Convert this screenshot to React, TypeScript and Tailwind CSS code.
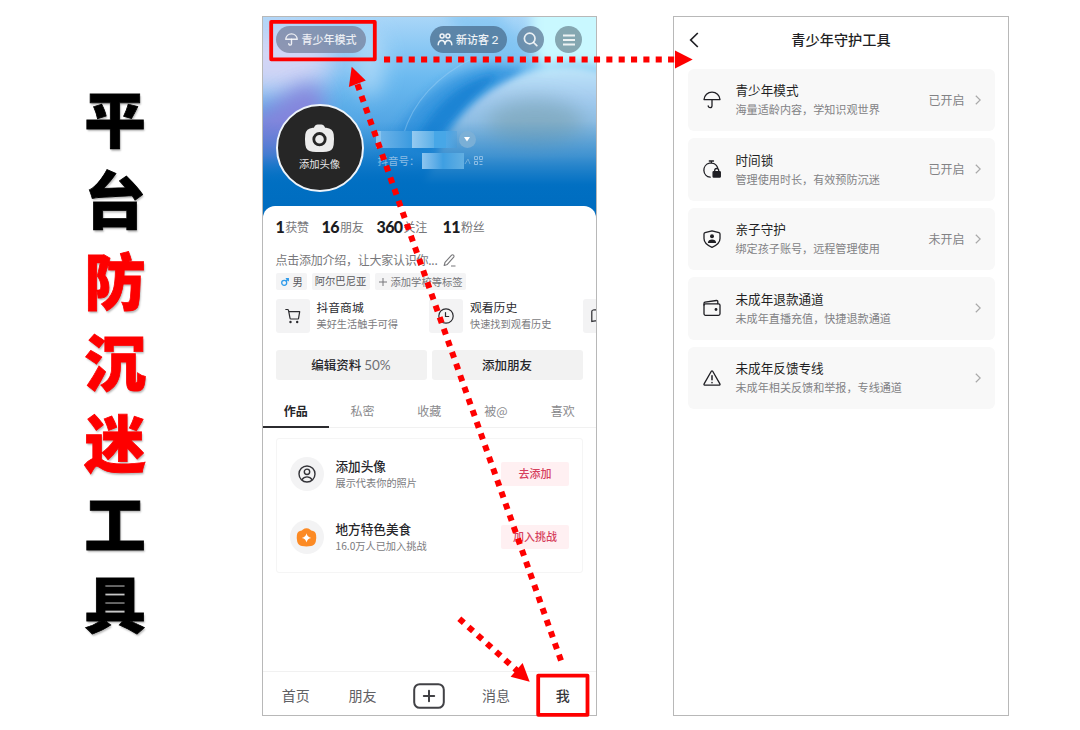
import React from 'react';

const RED = '#fe0000';

function Umbrella({ className, w = 1.5 }: { className: string; w?: number }) {
  return (
    <svg className={className} viewBox="0 0 18 18" fill="none" stroke="currentColor" strokeWidth={w} strokeLinecap="round" strokeLinejoin="round">
      <path d="M1 8.6C1.3 4.4 4.7 1.2 9 1.2s7.700 3.200 8 7.400Z" />
      <path d="M9 8.600v6.200a1.900 1.900 0 0 1-3.800 0" />
    </svg>
  );
}

function Chevron() {
  return (
    <svg className="h-[10px] w-[6px] text-[#a9a9a9]" viewBox="0 0 6 10" fill="none" stroke="currentColor" strokeWidth="1.200">
      <path d="M.8.8 5.200 5 .8 9.200" />
    </svg>
  );
}

function HeaderArt() {
  return (
    <svg className="absolute inset-0 h-full w-full" viewBox="0 0 333 202" preserveAspectRatio="none">
      <defs>
        <linearGradient id="sky" x1="0" y1="0" x2="0" y2="1">
          <stop offset="0" stopColor="#a9d6f8" />
          <stop offset=".3" stopColor="#6cbaf0" />
          <stop offset=".6" stopColor="#4a9fe0" />
          <stop offset=".82" stopColor="#0c73c6" />
          <stop offset="1" stopColor="#006cbf" />
        </linearGradient>
        <linearGradient id="fade" x1="0" y1="0" x2="0" y2="1">
          <stop offset="0" stopColor="#0070c4" stopOpacity="0" />
          <stop offset=".35" stopColor="#0070c4" stopOpacity=".4" />
          <stop offset=".65" stopColor="#006fc2" stopOpacity=".97" />
          <stop offset="1" stopColor="#006cbf" />
        </linearGradient>
        <linearGradient id="orb" x1="0" y1="0" x2="0" y2="1">
          <stop offset="0" stopColor="#bfe6fa" />
          <stop offset=".25" stopColor="#a6cdf0" />
          <stop offset=".6" stopColor="#7db3dc" />
          <stop offset="1" stopColor="#4c98d4" />
        </linearGradient>
        <filter id="b16" x="-60%" y="-60%" width="220%" height="220%"><feGaussianBlur stdDeviation="14" /></filter>
        <filter id="b9" x="-60%" y="-60%" width="220%" height="220%"><feGaussianBlur stdDeviation="10" /></filter>
        <filter id="b6" x="-40%" y="-40%" width="180%" height="180%"><feGaussianBlur stdDeviation="6" /></filter>
        <filter id="b3" x="-30%" y="-30%" width="160%" height="160%"><feGaussianBlur stdDeviation="3.500" /></filter>
      </defs>
      <rect width="333" height="202" fill="url(#sky)" />
      <ellipse cx="12" cy="44" rx="62" ry="34" fill="#dcd8f6" opacity=".9" filter="url(#b16)" />
      <path d="M-20 104C8 92 28 68 46 66c16 2 18 20 12 38l-30 40-50 5Z" fill="#8a7fda" opacity=".85" filter="url(#b9)" />
      <ellipse cx="106" cy="46" rx="16" ry="34" fill="#bcdff9" opacity=".7" filter="url(#b9)" />
      <path d="M118 150C135 95 185 48 236 48L262 50 200 140Z" fill="#2a8edb" opacity=".75" filter="url(#b6)" />
      <path d="M150 130C165 95 195 62 234 58L206 85 165 130Z" fill="#1680d2" opacity=".8" filter="url(#b3)" />
      <path d="M176 133C196 92 228 66 274 52Q314 44 350 60v110H160Z" fill="url(#orb)" filter="url(#b3)" />
      <ellipse cx="272" cy="106" rx="48" ry="24" fill="#7ea6b8" opacity=".7" filter="url(#b9)" />
      <path d="M268-14h84v68q-50-14-70-2-14-12-14-34Z" fill="#c9f8ff" filter="url(#b6)" />
      <path d="M180-5C200 20 225 44 250 46L262 30 235-5Z" fill="#7cc2f2" opacity=".6" filter="url(#b6)" />
      <path d="M140 118C150 84 175 58 212 40" fill="none" stroke="#a0d3f6" strokeWidth="1.100" opacity=".45" />
      <rect y="104" width="333" height="98" fill="url(#fade)" />
    </svg>
  );
}

function Camera() {
  return (
    <svg className="h-[29px] w-[31px]" viewBox="0 0 31 29">
      <path d="M10.500 2.600Q11.500.5 13.600.5h3.800q2.100 0 3.100 2.100l.6 1.200h1q6.900.7 7.600 6.500.7 5.200 0 10.400-.8 6.300-7.100 7-7.100.8-14.200 0-6.300-.7-7.100-7-.7-5.200 0-10.400.7-5.800 7.600-6.500h1Z" fill="#ececec" />
      <circle cx="15.500" cy="15.200" r="5.700" fill="#ececec" stroke="#262626" strokeWidth="2.800" />
    </svg>
  );
}

function Header() {
  return (
    <div className="relative h-[202px] shrink-0">
      <HeaderArt />
      <div className="relative flex h-[190px] flex-col px-[13px] pt-[9px] text-white/85">
        <div className="flex items-center">
          <div className="flex h-[27px] w-[90px] items-center gap-[4px] rounded-full bg-[#75809c]/75 pl-[9px]">
            <Umbrella className="h-[13px] w-[13px]" w={1.900} />
            <span className="whitespace-nowrap text-[11px] font-medium">青少年模式</span>
          </div>
          <div className="ml-auto flex h-[27px] w-[77px] items-center gap-[3px] rounded-full bg-[#4d7395]/80 pl-[7px] text-white/90">
            <svg className="h-[13px] w-[16px]" viewBox="0 0 16 13" fill="none" stroke="currentColor" strokeWidth="1.500" strokeLinecap="round">
              <circle cx="5.100" cy="3" r="2" /><circle cx="10.900" cy="3" r="2" />
              <path d="M1.200 11.800q.2-4.300 3.700-4.300 3 0 3.100 4.300.1-4.300 3.100-4.300 3.500 0 3.700 4.300" />
            </svg>
            <span className="whitespace-nowrap text-[11px] font-medium">新访客 <span className="font-[Lato] text-[12px]">2</span></span>
          </div>
          <div className="ml-[10px] flex size-[27px] items-center justify-center rounded-full bg-[#64829d]/80">
            <svg className="size-[15px]" viewBox="0 0 15 15" fill="none" stroke="currentColor" strokeWidth="1.700" strokeLinecap="round">
              <circle cx="6.700" cy="6.500" r="5.300" /><path d="m10.600 10.500 3.200 3.200" />
            </svg>
          </div>
          <div className="ml-[11px] mr-[1px] flex size-[27px] items-center justify-center rounded-full bg-[#7d9da9]/90">
            <svg className="h-[12px] w-[12px]" viewBox="0 0 12 12" stroke="currentColor" strokeWidth="1.800">
              <path d="M0 1.500h12M0 6h12M0 10.500h12" />
            </svg>
          </div>
        </div>
        <div className="mt-[51px] flex">
          <div className="flex size-[88px] shrink-0 flex-col items-center rounded-full border-2 border-[#eef4fa] bg-[#262626] pt-[18px]">
            <Camera />
            <span className="mt-[4px] text-[10.300px] leading-[14px] text-white/90">添加头像</span>
          </div>
          <div className="ml-[12px] pt-[27px]">
            <div className="flex items-center">
              <div className="h-[17px] w-[81px] bg-linear-to-r from-[#8ac4ee] from-5% via-[#52aae8] via-85% to-[#3b98dc]/30">
                <div className="ml-[5px] flex h-full">
                  <div className="h-full w-[29px] bg-linear-to-r from-[#6ab2e8] to-[#3d9ce0]" />
                  <div className="h-full w-[2px] bg-[#3d9ce0]" />
                  <div className="h-full w-[22px] bg-linear-to-r from-[#95caf0] to-[#5cb0e8]" />
                  <div className="h-full w-[12px] bg-[#47a7e7]" />
                </div>
              </div>
              <div className="ml-[2px] flex size-[17px] items-center justify-center rounded-full bg-[#7db0d6]/90">
                <svg className="h-[5px] w-[6px]" viewBox="0 0 6 5" fill="white"><path d="M0 0h6L3 4.500Z" /></svg>
              </div>
            </div>
            <div className="mt-[4px] flex h-[17px] items-center pl-[2px]">
              <span className="w-[42px] whitespace-nowrap text-[10.500px] text-[#8bbce4]">抖音号：</span>
              <div className="ml-[2px] h-[16px] w-[42px] bg-linear-to-r from-[#8dc5ef] via-[#3e9fe2] to-[#62afe2]" />
              <svg className="h-[8px] w-[8px]" viewBox="0 0 8 8" fill="none" stroke="#70addc" strokeWidth="1"><path d="m1 7 3-5 2 5" /></svg>
              <svg className="ml-[2px] size-[9px]" viewBox="0 0 9 9" fill="none" stroke="#8bbce4" strokeWidth="1">
                <path d="M.5.5h3v3h-3ZM5.500.5h3v3h-3ZM.5 5.500h3v3h-3ZM5.500 5.500h3M5.500 8.500h3" />
              </svg>
            </div>
          </div>
        </div>
      </div>
    </div>
  );
}

function Stat({ n, label, w }: { n: string; label: string; w: string }) {
  return (
    <div className={`flex items-center gap-[1px] whitespace-nowrap ${w}`}>
      <span className="font-[Lato] text-[16px] font-black tracking-[-0.600px] text-[#1c1c22]">{n}</span>
      <span className="text-[12px] tracking-[-0.200px] text-[#77777a]">{label}</span>
    </div>
  );
}

function Shortcut({ title, sub, w, children }: { title: string; sub: string; w: string; children: React.ReactNode }) {
  return (
    <div className={`flex shrink-0 ${w}`}>
      <div className="flex size-[34px] shrink-0 items-center justify-center rounded-[3px] bg-[#f3f3f4] text-[#2b2b2f]">{children}</div>
      <div className="-mt-px ml-[7px] whitespace-nowrap">
        <div className="text-[11.800px] leading-[18px] text-[#2b2b2f]">{title}</div>
        <div className="text-[10.200px] leading-[16px] text-[#7b7b7e]">{sub}</div>
      </div>
    </div>
  );
}

function Task({ title, sub, action, children }: { title: string; sub: string; action: string; children: React.ReactNode }) {
  return (
    <div className="flex h-[34px] items-center">
      <div className="flex size-[34px] shrink-0 items-center justify-center rounded-full bg-[#f3f3f4]">{children}</div>
      <div className="ml-[12px] whitespace-nowrap">
        <div className="text-[12.600px] font-medium leading-[18px] text-[#26262a]">{title}</div>
        <div className="text-[10.200px] leading-[16px] text-[#7b7b7e]">{sub}</div>
      </div>
      <div className="ml-auto flex h-[24px] w-[68px] items-center justify-center rounded-[2px] bg-[#fff0f2] pb-[2px] text-[11px] font-medium text-[#d6405c]">{action}</div>
    </div>
  );
}

function ProfilePhone() {
  return (
    <div className="mt-[16px] flex h-[700px] w-[335.500px] shrink-0 flex-col overflow-hidden border border-[#b8b8b8] bg-white">
      <Header />
      <div className="relative -mt-[13px] flex min-h-0 flex-1 flex-col rounded-t-[12px] bg-white">
        <div className="mt-[10px] flex h-[22px] items-center pl-[13px]">
          <Stat n="1" label="获赞" w="w-[46px]" />
          <Stat n="16" label="朋友" w="w-[55px]" />
          <Stat n="360" label="关注" w="w-[66px]" />
          <Stat n="11" label="粉丝" w="" />
        </div>
        <div className="mt-[12px] flex h-[20px] items-center gap-[5px] whitespace-nowrap pl-[13px] text-[12px] tracking-[-0.250px] text-[#77777a]">
          点击添加介绍，让大家认识你...
          <svg className="h-[13px] w-[13px]" viewBox="0 0 13 13" fill="none" stroke="currentColor" strokeWidth="1.100" strokeLinejoin="round">
            <path d="M1.200 11.500 2 8.300 8.600 1.200q1-.8 1.900 0t.2 1.900L4.300 10.400ZM8 12h4.500" />
          </svg>
        </div>
        <div className="mt-[3px] flex h-[17px] gap-[5px] whitespace-nowrap pl-[13px] text-[10.300px] leading-[16px] text-[#58585c]">
          <div className="flex w-[31px] items-center gap-[4px] rounded-[2px] bg-[#f4f4f5] pl-[5px]">
            <svg className="size-[8px]" viewBox="0 0 8 8" fill="none" stroke="#2f9bea" strokeWidth="1.300"><circle cx="3.200" cy="4.800" r="2.500" /><path d="M5 3 7.300.7M4.800.7h2.500v2.500" /></svg>
            <span>男</span>
          </div>
          <div className="w-[58px] rounded-[2px] bg-[#f4f4f5] text-center">阿尔巴尼亚</div>
          <div className="flex w-[91px] items-center gap-[4px] rounded-[2px] bg-[#f4f4f5] pl-[4px] text-[#77777a]">
            <svg className="size-[8px]" viewBox="0 0 8 8" stroke="currentColor"><path d="M0 4h8M4 0v8" /></svg>
            <span>添加学校等标签</span>
          </div>
        </div>
        <div className="mt-[9px] flex overflow-visible pl-[13px]">
          <Shortcut title="抖音商城" sub="美好生活触手可得" w="w-[153.500px]">
            <svg className="h-[16px] w-[16px]" viewBox="0 0 16 16" fill="none" stroke="currentColor" strokeWidth="1.200" strokeLinecap="round" strokeLinejoin="round">
              <path d="M.8 1.500h1.700q.8 0 1 .8L5 10.200q.1.800 1 .8h7M3.700 3.700h11l-1.200 7" />
              <circle cx="5.500" cy="14" r=".6" fill="currentColor" /><circle cx="12.200" cy="14" r=".6" fill="currentColor" />
            </svg>
          </Shortcut>
          <Shortcut title="观看历史" sub="快速找到观看历史" w="w-[153.500px]">
            <svg className="h-[16px] w-[16px]" viewBox="0 0 16 16" fill="none" stroke="currentColor" strokeWidth="1.200" strokeLinecap="round">
              <circle cx="8" cy="8" r="7.200" /><path d="M7.500 4.500v4h3.200" />
            </svg>
          </Shortcut>
          <div className="flex h-[34px] w-[34px] shrink-0 items-center rounded-[3px] bg-[#f3f3f4] pl-[8px] text-[#2b2b2f]">
            <svg className="h-[14px] w-[16px]" viewBox="0 0 16 14" fill="none" stroke="currentColor" strokeWidth="1.200"><path d="M8 2.500Q5 .2 2 1 .8 1.200.8 2.500v10Q5 11 8 13q3-2 7-.5v-10Q12-.5 8 2.500Z" /></svg>
          </div>
        </div>
        <div className="mt-[17px] flex h-[30px] gap-[5px] px-[13px] text-[12.500px] leading-[30px] text-[#26262a]">
          <div className="w-[151px] rounded-[3px] bg-[#f2f2f2] text-center font-medium">编辑资料 <span className="font-[Lato] text-[13.500px] font-normal text-[#707074]">50%</span></div>
          <div className="w-[151px] rounded-[3px] bg-[#f2f2f2] text-center font-medium">添加朋友</div>
        </div>
        <div className="mt-[16px] grid h-[32px] grid-cols-5 border-b border-[#f1f1f1] text-center text-[12px] leading-[30px] text-[#8a8a8d]">
          <div className="h-[32px] border-b-2 border-[#2b2b2f] font-bold text-[#26262a]">作品</div>
          <div>私密</div>
          <div>收藏</div>
          <div>被@</div>
          <div>喜欢</div>
        </div>
        <div className="mx-[13px] mt-[10px] flex h-[135px] flex-col gap-[29px] rounded-[3px] border border-[#f5f5f5] px-[13px] pt-[18px]">
          <Task title="添加头像" sub="展示代表你的照片" action="去添加">
            <svg className="size-[18px]" viewBox="0 0 18 18" fill="none" stroke="#333338" strokeWidth="1.400"><circle cx="9" cy="9" r="8" /><circle cx="9" cy="6.800" r="2.700" /><path d="M3.800 14.800q2-2.900 5.200-2.900t5.200 2.900" /></svg>
          </Task>
          <Task title="地方特色美食" sub="16.0万人已加入挑战" action="加入挑战">
            <svg className="h-[19px] w-[21px]" viewBox="0 0 21 19"><path d="M7 1.600Q8.500.3 10.500.3t3.500 1.300l1.200 1q4.300.3 4.900 4.400.5 3.300-.3 6.500-.9 3.800-4.700 4.600-4.600.8-9.200 0-3.800-.8-4.700-4.600-.8-3.200-.3-6.500.6-4.100 4.900-4.400Z" fill="#fc8a24" /><path d="M10.500 5.200q.6 3.900 4.700 4.700-4.100.8-4.700 4.700-.6-3.900-4.700-4.700 4.100-.8 4.700-4.700Z" fill="white" /></svg>
          </Task>
        </div>
        <div className="mt-auto grid h-[44px] grid-cols-5 items-center justify-items-center border-t border-[#f1f1f1] pt-[4px] text-[14px] text-[#606064]">
          <span>首页</span>
          <span>朋友</span>
          <svg className="h-[26px] w-[32px]" viewBox="0 0 32 26" fill="none" stroke="#414145" strokeWidth="2"><rect x="1.200" y="1.200" width="29.600" height="23.600" rx="5.500" /><path d="M10.800 13h10.400M16 7.800v10.400" strokeLinecap="round" /></svg>
          <span>消息</span>
          <span className="font-medium text-[#36363a]">我</span>
        </div>
      </div>
    </div>
  );
}

const stroke = { fill: 'none', stroke: 'currentColor', strokeWidth: 1.300, strokeLinecap: 'round', strokeLinejoin: 'round' } as const;

const tools = [
  { title: '青少年模式', sub: '海量适龄内容，学知识观世界', status: '已开启', icon: <Umbrella className="size-[18px]" w={1.300} /> },
  {
    title: '时间锁', sub: '管理使用时长，有效预防沉迷', status: '已开启',
    icon: (
      <svg className="size-[18px]" viewBox="0 0 18 18" {...stroke}>
        <path d="M6.300 1h4.200M8.400 1v2M7.200 17.200A7.100 7.100 0 1 1 14.600 7.600" />
        <path d="M11.700 11.800V10.500a2 2 0 0 1 4 0v1.300" />
        <rect x="10.100" y="11.700" width="7.200" height="5.300" rx=".6" fill="currentColor" />
      </svg>
    ),
  },
  {
    title: '亲子守护', sub: '绑定孩子账号，远程管理使用', status: '未开启',
    icon: (
      <svg className="size-[18px]" viewBox="0 0 18 18" {...stroke}>
        <path d="M9 .8 16 2.700q1 .3 1 1.300v4.500q0 5.500-8 8.800-8-3.300-8-8.800V4q0-1 1-1.300Z" />
        <circle cx="9" cy="6.200" r="2" fill="currentColor" stroke="none" />
        <path d="M4.900 12.400q.4-3 4.100-3t4.100 3q0 .5-.6.500h-7q-.6 0-.6-.5Z" fill="currentColor" stroke="none" />
      </svg>
    ),
  },
  {
    title: '未成年退款通道', sub: '未成年直播充值，快捷退款通道', status: '',
    icon: (
      <svg className="size-[18px]" viewBox="0 0 18 18" {...stroke}>
        <rect x="1" y="4.800" width="16" height="11.500" rx="1.500" />
        <path d="M1 6V4.400q0-1 1-1.200l11.500-1.700q1.300-.1 1.300 1.200v1.800" />
        <circle cx="13" cy="10.500" r="1.400" fill="currentColor" stroke="none" />
      </svg>
    ),
  },
  {
    title: '未成年反馈专线', sub: '未成年相关反馈和举报，专线通道', status: '',
    icon: (
      <svg className="size-[18px]" viewBox="0 0 18 18" {...stroke}>
        <path d="M8.300 2.300q.7-1 1.400 0l7.200 12.600q.5 1.100-.6 1.300H1.700q-1.100-.2-.6-1.300Z" />
        <path d="M9 6.800v4M9 13.400v.3" strokeWidth="1.500" />
      </svg>
    ),
  },
];

function ToolsPhone() {
  return (
    <div className="mt-[16px] h-[700px] w-[336px] shrink-0 border border-[#b8b8b8] bg-white px-[13.500px]">
      <div className="relative flex h-[46px] items-center justify-center pb-px text-[14.200px] font-medium text-[#1f1f24]">
        <svg className="absolute left-[1px] h-[16px] w-[10px]" viewBox="0 0 10 16" fill="none" stroke="currentColor" strokeWidth="1.700"><path d="M8.800 1 1.700 8l7.100 7" /></svg>
        青少年守护工具
      </div>
      <div className="mt-[5.500px] flex flex-col gap-[7px]">
        {tools.map((t) => (
          <div key={t.title} className="flex h-[62.500px] items-center rounded-[6px] bg-[#f8f8f8] pl-[15px] pr-[14px] text-[#1f1f24]">
            {t.icon}
            <div className="ml-[15px] whitespace-nowrap">
              <div className="text-[12.600px] leading-[20px]">{t.title}</div>
              <div className="text-[11.100px] leading-[19px] text-[#828285]">{t.sub}</div>
            </div>
            <div className="ml-auto flex items-center gap-[10px] text-[12px] text-[#828285]">
              {t.status}
              <Chevron />
            </div>
          </div>
        ))}
      </div>
    </div>
  );
}

function Annotations() {
  return (
    <svg className="pointer-events-none absolute inset-0" width="1080" height="730" viewBox="0 0 1080 730" fill="none" stroke={RED}>
      <rect x="271.200" y="21.900" width="103.600" height="37.400" strokeWidth="3.800" strokeLinejoin="round" />
      <rect x="538.200" y="675.600" width="49.300" height="39.200" strokeWidth="3.800" strokeLinejoin="round" />
      <g strokeWidth="6" strokeDasharray="6.100 6.250">
        <path d="M384 59.500H676" />
        <path d="M561 660.600 357.300 84" />
        <path d="M459.300 618.700 517.500 671" />
      </g>
      <g fill={RED} stroke="none">
        <path d="M675 50.600 692.700 59.600 675 68.600Z" />
        <path d="M351.700 66.700 365.800 80.500 348.900 87Z" />
        <path d="M529.700 681.800 522.600 663 510.600 676.800Z" />
      </g>
    </svg>
  );
}

export default function App() {
  return (
    <div className="relative flex h-[730px] w-[1080px] overflow-hidden bg-white font-['Noto_Sans_CJK_SC',sans-serif]">
      <h1 className="ml-[84px] mr-[115.500px] mt-[77px] flex w-[62px] shrink-0 flex-col items-center text-[61.500px] font-black leading-[80.900px] text-black [-webkit-text-stroke:0.8px_currentColor] [text-shadow:1px_2px_2px_rgba(0,0,0,0.28)]">
        {['平', '台', '防', '沉', '迷', '工', '具'].map((c, i) => (
          <span key={c} className={i >= 2 && i <= 4 ? 'text-[#fe0000] [-webkit-text-stroke:0.8px_#fe0000]' : ''}>{c}</span>
        ))}
      </h1>
      <ProfilePhone />
      <div className="w-[76px] shrink-0" />
      <ToolsPhone />
      <Annotations />
    </div>
  );
}
